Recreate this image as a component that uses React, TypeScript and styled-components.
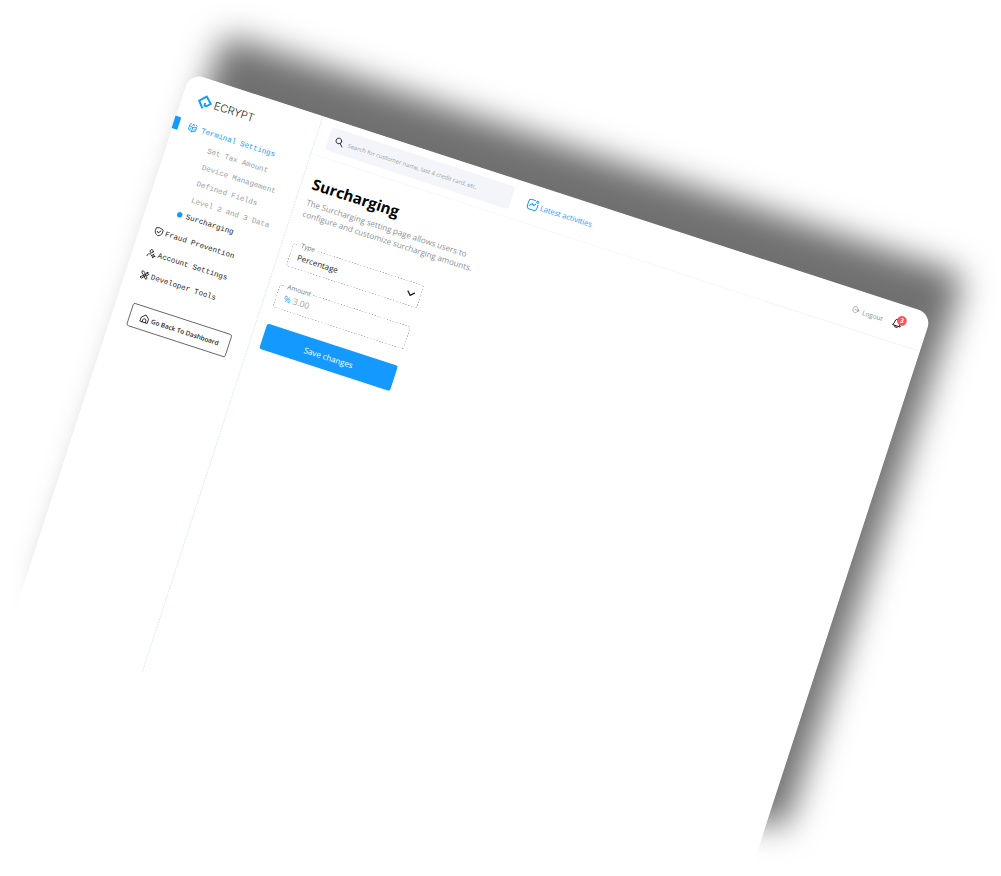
import React from "react";
import styled, { createGlobalStyle } from "styled-components";

const blue = "#149aff";
const sans = '"Open Sans", "Noto Sans", sans-serif';
const mono = '"Liberation Mono", monospace';

const GlobalStyle = createGlobalStyle`
  *, *::before, *::after { box-sizing: border-box; }
  body { margin: 0; background: #fff; font-family: ${sans}; }
  button, input, select { font-family: inherit; }
`;

const Stage = styled.div`
  height: 100vh;
  min-height: 600px;
  overflow: hidden;
  padding: 73px 0 0 190px;
  background: #fff;
`;

const Board = styled.div`
  display: flex;
  width: 1442px;
  min-height: 1080px;
  background: #fff;
  border-radius: 26px;
  box-shadow: 37px -88px 60px rgba(0, 0, 0, 0.56);
  transform: rotate(18deg) scale(0.541);
  transform-origin: 0 0;
`;

const Sidebar = styled.aside`
  flex: 0 0 259px;
  border-right: 1px dashed #bcd9fb;
  padding-top: 29px;
`;

const Logo = styled.a`
  display: flex;
  align-items: center;
  gap: 4px;
  height: 28px;
  padding-left: 29px;
  color: #222;
  font: 300 20px/28px Inter, sans-serif;
  text-decoration: none;
`;

const Nav = styled.nav`
  margin-top: 26px;
  font-family: ${mono};
  font-size: 14px;
`;

const NavLink = styled.a<{ $active?: boolean }>`
  display: flex;
  align-items: center;
  gap: ${(p) => (p.$active ? 8 : 3)}px;
  height: ${(p) => (p.$active ? 24 : 42)}px;
  padding-left: ${(p) => (p.$active ? 17 : 27)}px;
  color: ${(p) => (p.$active ? blue : "#1d1d1d")};
  text-decoration: none;

  &::before {
    content: "";
    display: ${(p) => (p.$active ? "block" : "none")};
    width: 11px;
    height: 24px;
    margin-left: -18px;
    margin-right: 9px;
    background: ${blue};
  }
`;

const SubList = styled.ul`
  list-style: none;
  margin: 4px 0 5px;
  padding: 0;
`;

const SubLink = styled.a<{ $current?: boolean }>`
  display: flex;
  align-items: center;
  height: 32px;
  padding-left: ${(p) => (p.$current ? 58 : 75)}px;
  gap: 7px;
  color: ${(p) => (p.$current ? "#1d1d1d" : "#9a9da1")};
  text-decoration: none;
`;

const Dot = styled.span`
  width: 10px;
  height: 10px;
  border-radius: 50%;
  background: ${blue};
`;

const BackButton = styled.button`
  display: flex;
  align-items: center;
  justify-content: center;
  gap: 4px;
  width: 192px;
  height: 44px;
  margin: 34px 0 0 32px;
  padding: 0;
  border: 1px solid #000;
  border-radius: 4px;
  background: #fff;
  color: #1d1d1d;
  font-size: 12px;
  font-weight: 600;
`;

const Main = styled.main`
  flex: 1;
  min-width: 0;
`;

const Header = styled.header`
  display: flex;
  align-items: center;
  height: 73px;
  padding: 0 46px 0 22px;
  border-bottom: 1px solid #f0f2f5;
`;

const Search = styled.label`
  display: flex;
  align-items: center;
  gap: 8px;
  width: 356px;
  height: 44px;
  padding: 0 12px;
  border-radius: 4px;
  background: #f4f5fa;
  color: #1d1d1d;
`;

const SearchInput = styled.input`
  flex: 1;
  min-width: 0;
  padding: 0;
  border: 0;
  outline: 0;
  background: transparent;
  font-size: 11px;
  &::placeholder { color: #9a9da1; opacity: 1; }
`;

const Activities = styled.a`
  display: flex;
  align-items: center;
  gap: 4px;
  margin-left: 30px;
  color: ${blue};
  font-size: 14px;
  text-decoration: none;
`;

const Logout = styled.button`
  display: flex;
  align-items: center;
  gap: 6px;
  margin-left: auto;
  padding: 0;
  border: 0;
  background: none;
  color: #85898e;
  font-size: 12px;
`;

const Bell = styled.button`
  position: relative;
  display: flex;
  margin-left: 18px;
  padding: 0;
  border: 0;
  background: none;
  color: #111;
`;

const Badge = styled.span`
  position: absolute;
  top: -6px;
  right: -6px;
  width: 18px;
  height: 18px;
  border-radius: 50%;
  background: #ff5157;
  color: #fff;
  font-size: 12px;
  font-weight: 700;
  line-height: 18px;
  text-align: center;
`;

const Content = styled.section`
  padding: 33px 20px 0;
`;

const Title = styled.h1`
  margin: 0;
  font-size: 28px;
  line-height: 36px;
  font-weight: 700;
  color: #000;
`;

const Description = styled.p`
  margin: 7px 0 47px;
  color: #8d9196;
  font-size: 15px;
  line-height: 22px;
`;

const Form = styled.form`
  width: 254px;
`;

const Field = styled.div`
  position: relative;
  display: flex;
  align-items: center;
  height: 44px;
  margin-bottom: 36px;
  border: 1px dashed #666a6f;
  border-radius: 4px;
`;

const FieldLabel = styled.label`
  position: absolute;
  top: -9px;
  left: 10px;
  padding: 0 4px;
  background: #fff;
  color: #6f7377;
  font-size: 12px;
  line-height: 16px;
`;

const Select = styled.select`
  width: 100%;
  height: 100%;
  padding: 0 36px 0 14px;
  border: 0;
  outline: 0;
  appearance: none;
  background: transparent;
  color: #1d1d1d;
  font-size: 15px;
`;

const Chevron = styled.svg`
  position: absolute;
  right: 10px;
  pointer-events: none;
`;

const Percent = styled.span`
  padding-left: 14px;
  color: ${blue};
  font-size: 16px;
`;

const AmountInput = styled.input`
  flex: 1;
  min-width: 0;
  height: 100%;
  padding: 0 4px;
  border: 0;
  outline: 0;
  background: transparent;
  font-size: 16px;
  &::placeholder { color: #a0a3a7; opacity: 1; }
`;

const SaveButton = styled.button`
  width: 100%;
  height: 49px;
  margin-top: -4px;
  border: 0;
  border-radius: 4px;
  background: ${blue};
  color: #fff;
  font-size: 15px;
`;

type GlyphProps = { size?: number; stroke?: number; children: React.ReactNode };

const Glyph = ({ size = 18, stroke = 2, children }: GlyphProps) => (
  <svg
    width={size}
    height={size}
    viewBox="0 0 24 24"
    fill="none"
    stroke="currentColor"
    strokeWidth={stroke}
    strokeLinecap="round"
    strokeLinejoin="round"
    aria-hidden="true"
  >
    {children}
  </svg>
);

const subItems = ["Set Tax Amount", "Device Management", "Defined Fields", "Level 2 and 3 Data", "Surcharging"];

export default function App() {
  return (
    <>
      <GlobalStyle />
      <Stage>
        <Board>
          <Sidebar>
            <Logo href="#">
              <svg width="28" height="28" viewBox="0 0 28 28" fill="none" stroke={blue} strokeWidth="3.6" aria-hidden="true">
                <path d="M13 26L3 14.5L14 3L25 13.5L19 20H15V15" />
              </svg>
              ECRYPT
            </Logo>
            <Nav>
              <NavLink href="#" $active>
                <Glyph>
                  <path d="M3 9L12 11L21 9M12 11V22M3 9V18L12 22L21 18V9" />
                  <path d="M7 15V17M17 15V17M3 5L6 3M10 6L12 2L14 6M18 3L21 5" />
                </Glyph>
                Terminal Settings
              </NavLink>
              <SubList>
                {subItems.map((item) => (
                  <li key={item}>
                    <SubLink href="#" $current={item === "Surcharging"}>
                      {item === "Surcharging" && <Dot />}
                      {item}
                    </SubLink>
                  </li>
                ))}
              </SubList>
              <NavLink href="#">
                <Glyph>
                  <path d="M12 2L21 5V12C21 17 17 20 12 22C7 20 3 17 3 12V5Z" />
                  <path d="M8 12L11 15L16 9" />
                </Glyph>
                Fraud Prevention
              </NavLink>
              <NavLink href="#">
                <Glyph>
                  <circle cx="10" cy="7" r="4" />
                  <path d="M2 21C2 16 5 14 10 14" />
                  <circle cx="17" cy="17" r="3" />
                  <path d="M17 12V14M17 20V22M12 17H14M20 17H22" />
                </Glyph>
                Account Settings
              </NavLink>
              <NavLink href="#">
                <Glyph>
                  <path d="M3 5L5 3L10 6L11 9L20 18L18 21L15 20L8 12L5 10Z" />
                  <path d="M3 19L14 9Q13 4 18 3L17 7L21 7Q21 12 16 11L6 22Q3 22 3 19" />
                </Glyph>
                Developer Tools
              </NavLink>
            </Nav>
            <BackButton type="button">
              <Glyph>
                <path d="M3 10L12 2L21 10V21H3ZM8 21V16A4 4 0 0 1 16 16V21" />
              </Glyph>
              Go Back To Dashboard
            </BackButton>
          </Sidebar>
          <Main>
            <Header>
              <Search>
                <Glyph>
                  <circle cx="10" cy="10" r="7" />
                  <path d="M15 15L22 22" />
                </Glyph>
                <SearchInput
                  type="search"
                  aria-label="Search"
                  placeholder="Search for customer name, last 4 credit card, etc."
                />
              </Search>
              <Activities href="#">
                <Glyph size={22}>
                  <path d="M15 2H8Q2 2 2 8V16Q2 22 8 22H16Q22 22 22 16V9" />
                  <path d="M6 15L10 10L14 13L17 9" />
                  <circle cx="20" cy="4" r="2" />
                </Glyph>
                Latest activities
              </Activities>
              <Logout type="button">
                <Glyph size={14}>
                  <path d="M16 5Q14 2 10 2Q2 3 2 12Q2 21 10 22Q14 22 16 19" />
                  <path d="M9 12H22M18 8L22 12L18 16" />
                </Glyph>
                Logout
              </Logout>
              <Bell type="button" aria-label="Notifications">
                <Glyph size={20}>
                  <path d="M12 3A6 6 0 0 0 6 9V13L3 18H21L18 13V9A6 6 0 0 0 12 3ZM9 21H15" />
                </Glyph>
                <Badge>3</Badge>
              </Bell>
            </Header>
            <Content>
              <Title>Surcharging</Title>
              <Description>
                The Surcharging setting page allows users to
                <br />
                configure and customize surcharging amounts.
              </Description>
              <Form onSubmit={(e) => e.preventDefault()}>
                <Field>
                  <FieldLabel htmlFor="type">Type</FieldLabel>
                  <Select id="type" defaultValue="percentage">
                    <option value="percentage">Percentage</option>
                    <option value="fixed">Fixed</option>
                  </Select>
                  <Chevron width="16" height="10" viewBox="0 0 16 10" fill="none" stroke="#1d1d1d" strokeWidth="2.4">
                    <path d="M1 1L8 8L15 1" />
                  </Chevron>
                </Field>
                <Field>
                  <FieldLabel htmlFor="amount">Amount</FieldLabel>
                  <Percent>%</Percent>
                  <AmountInput id="amount" placeholder="3.00" />
                </Field>
                <SaveButton type="submit">Save changes</SaveButton>
              </Form>
            </Content>
          </Main>
        </Board>
      </Stage>
    </>
  );
}
